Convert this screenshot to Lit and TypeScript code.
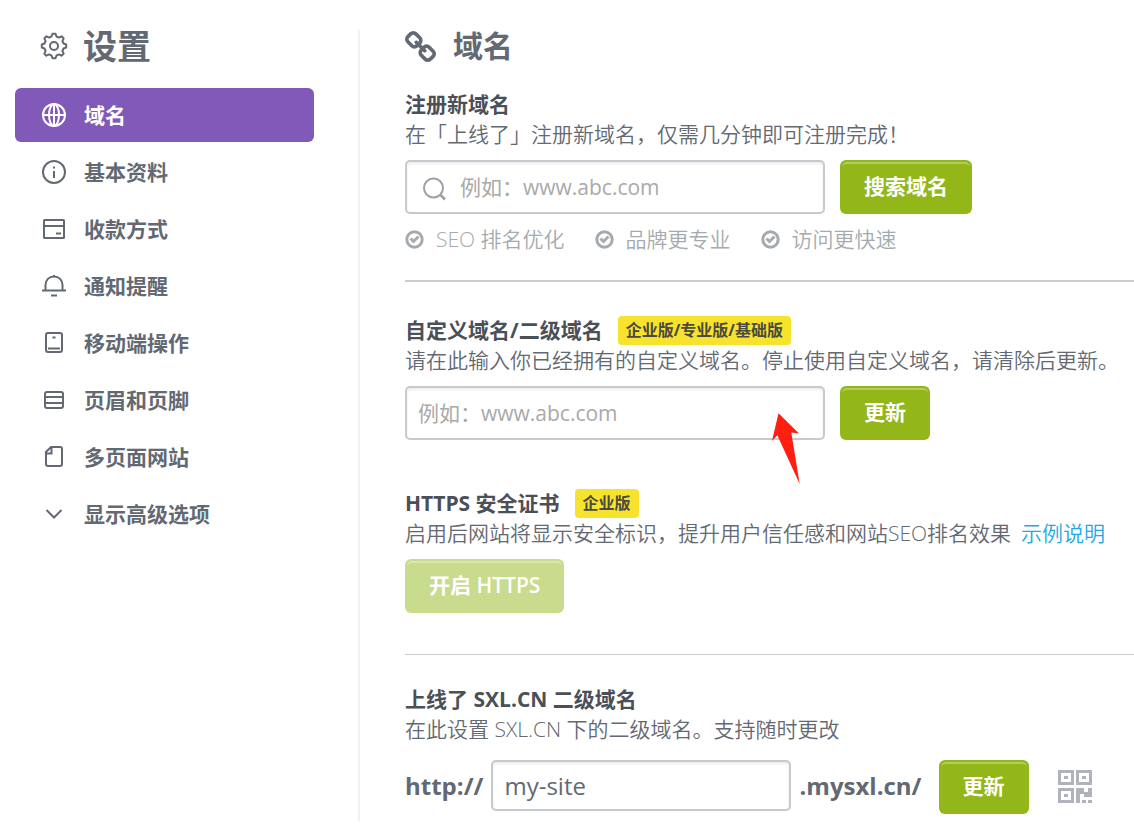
import { LitElement, html, css, svg } from "lit";
import { customElement, state } from "lit/decorators.js";
import { classMap } from "lit/directives/class-map.js";

const icons: Record<string, unknown> = {
  globe: svg`<circle cx="14" cy="14" r="11"/><ellipse cx="14" cy="14" rx="5" ry="11"/><path d="M3 14H25M14 3V25"/>`,
  info: svg`<circle cx="14" cy="14" r="11"/><path d="M14 13V20M14 8.5V10.5"/>`,
  card: svg`<rect x="4" y="5" width="20" height="18" rx="0.5"/><path d="M4 11H24M16 18.5H21"/>`,
  bell: svg`<path d="M2 18.5H26M5.5 18V13C5.5 8 9 4.5 14 4.5S22.500 8 22.500 13V18M14 3V5M11 23.500H17"/>`,
  mobile: svg`<rect x="6" y="4" width="16" height="19" rx="2"/><path d="M8 19.500H20M12.500 8.500H15.500"/>`,
  rows: svg`<rect x="5" y="6" width="18" height="16" rx="2"/><path d="M5 11H23M5 17H23"/>`,
  page: svg`<path d="M11 4H20Q22 4 22 6V21Q22 23 20 23H8Q6 23 6 21V9ZM11.500 4V10.500H6"/>`,
  down: svg`<path d="M6.500 10 14 17.500 21.500 10"/>`,
};

const items = [
  ["globe", "域名"],
  ["info", "基本资料"],
  ["card", "收款方式"],
  ["bell", "通知提醒"],
  ["mobile", "移动端操作"],
  ["rows", "页眉和页脚"],
  ["page", "多页面网站"],
  ["down", "显示高级选项"],
];

const perks = ["SEO 排名优化", "品牌更专业", "访问更快速"];

@customElement("app-root")
export class AppRoot extends LitElement {
  @state() private current = 0;

  static styles = css`
    :host {
      display: block;
      font-family: "Open Sans", "Noto Sans CJK SC", sans-serif;
      font-size: 21px;
      line-height: 30px;
      color: #636972;
      background: #fff;
    }
    * { box-sizing: border-box; }
    .page {
      display: grid;
      grid-template-columns: 360px minmax(0, 1fr);
      padding-top: 30px;
    }
    .side {
      border-right: 2px solid #f1f1f3;
      padding: 0 44px 0 15px;
    }
    .title, .heading {
      display: flex;
      align-items: center;
      margin: 0;
      font-weight: 700;
      height: 32px;
    }
    .title { font-size: 34px; gap: 15px; padding-left: 25px; margin-bottom: 26px; }
    .heading { font-size: 30px; gap: 17px; margin-bottom: 27px; }
    .icon {
      flex: none;
      width: 28px;
      height: 28px;
      fill: none;
      stroke: currentColor;
      stroke-width: 2;
    }
    .link-icon { flex: none; width: 31px; height: 31px; fill: currentColor; }
    .nav { display: flex; flex-direction: column; gap: 3px; }
    .item {
      display: flex;
      align-items: center;
      gap: 16px;
      height: 54px;
      padding-left: 25px;
      border-radius: 6px;
      color: inherit;
      font-weight: 700;
      text-decoration: none;
    }
    .item.on { background: #8159b9; color: #fff; }
    .main { padding: 0 0 7px 45px; }
    .name {
      display: flex;
      align-items: center;
      gap: 15px;
      margin: 0;
      font-size: 21px;
      font-weight: 700;
      color: #4b5058;
    }
    .desc { margin: 0; font-weight: 350; }
    .tag {
      padding: 0 8px;
      font-size: 16px;
      line-height: 29px;
      border-radius: 4px;
      background: #f7e32d;
      color: #4a4a40;
    }
    .row { display: flex; align-items: center; gap: 15px; margin-top: 11px; }
    .field { position: relative; width: 420px; }
    .box {
      display: block;
      width: 100%;
      height: 54px;
      padding: 0 11px;
      font: inherit;
      color: #636972;
      border: 2px solid #c6c9cd;
      border-radius: 5px;
      background: #fff;
      box-shadow: inset 0 2px 3px #ececee;
      outline: none;
    }
    .box::placeholder { color: #a9a9a9; opacity: 1; }
    .search .box { padding-left: 53px; }
    .glass { position: absolute; left: 16px; top: 16px; color: #a0a0a0; }
    .arrow { position: absolute; left: 366px; top: 26px; width: 30px; height: 74px; fill: #ff1e0f; }
    .btn {
      position: relative;
      height: 54px;
      padding: 0 24px 2px;
      border: 0;
      border-radius: 6px;
      background: #93b719;
      color: #fff;
      font: inherit;
      font-weight: 600;
      cursor: pointer;
    }
    .btn::before {
      content: "";
      position: absolute;
      inset: 2px 2px auto;
      height: 8px;
      border-top: 2px solid #b3cc5e;
      border-radius: 6px;
    }
    .btn:disabled { background: #c9db8c; cursor: default; }
    .btn:disabled::before { border-color: #dbe7b2; }
    .perks {
      display: flex;
      gap: 30px;
      margin: 10px 0 26px;
      padding: 0;
      list-style: none;
      font-weight: 350;
      color: #a5aaaf;
    }
    .perk { display: flex; align-items: center; gap: 12px; }
    .check { width: 19px; height: 19px; fill: none; stroke: currentColor; stroke-width: 3; }
    .rule { height: 0; margin: 0; border: 0; border-top: 2px solid #cacdd0; }
    .rule.thin { border-top-width: 1px; margin-top: 41px; }
    .block { padding-top: 33px; }
    .block.last { padding-top: 29px; }
    .block.https { padding-top: 48px; }
    .more { margin-left: 10px; color: #1fa8e4; text-decoration: none; }
    .site { align-items: flex-start; gap: 8px; margin-top: 16px; font-size: 24px; font-weight: 700; line-height: 51px; }
    .site .field { width: 300px; }
    .site .box { height: 51px; font-weight: 400; }
    .site .btn { margin-left: 9px; font-size: 21px; line-height: 30px; }
    .qr { flex: none; align-self: center; width: 34px; height: 34px; margin-left: 21px; fill: #b0b4ba; }
  `;

  render() {
    return html`
      <div class="page">
        <aside class="side">
          <h1 class="title">
            <svg class="icon" viewBox="0 0 28 28">
              <path stroke-linejoin="round" d="M11.500 4.500 12.500 1.800H15.500L16.500 4.500 19 5.600 21.600 4.300 23.700 6.400 22.400 9 23.500 11.500 26.200 12.500V15.500L23.500 16.500 22.400 19 23.700 21.600 21.600 23.700 19 22.400 16.500 23.500 15.500 26.200H12.500L11.500 23.500 9 22.400 6.400 23.700 4.300 21.600 5.600 19 4.500 16.500 1.800 15.500V12.500L4.500 11.500 5.600 9 4.300 6.400 6.400 4.300 9 5.600Z"/>
              <circle cx="14" cy="14" r="4"/>
            </svg>
            设置
          </h1>
          <nav class="nav">
            ${items.map(
              ([icon, label], i) => html`
                <a
                  href="#"
                  class=${classMap({ item: true, on: i === this.current })}
                  @click=${(e: Event) => { e.preventDefault(); this.current = i; }}
                ><svg class="icon" viewBox="0 0 28 28">${icons[icon]}</svg>${label}</a>
              `
            )}
          </nav>
        </aside>
        <main class="main">
          <h2 class="heading">
            <svg class="link-icon" viewBox="16 16 1632 1632">
              <path d="M1456 1216q0-40-28-68l-208-208q-28-28-68-28-42 0-72 32 3 3 19 18.500t21.500 21.500 15 19 13 25.500 3.500 27.500q0 40-28 68t-68 28q-15 0-27.500-3.500t-25.500-13-19-15-21.500-21.500-18.500-19q-33 31-33 73 0 40 28 68l206 207q27 27 68 27 40 0 68-26l147-146q28-28 28-67zm-703-705q0-40-28-68l-206-207q-28-28-68-28-39 0-68 27l-147 146q-28 28-28 67 0 40 28 68l208 208q27 27 68 27 42 0 72-31-3-3-19-18.500t-21.500-21.500-15-19-13-25.500-3.500-27.500q0-40 28-68t68-28q15 0 27.500 3.500t25.500 13 19 15 21.500 21.500 18.500 19q33-31 33-73zm895 705q0 120-85 203l-147 146q-83 83-203 83-121 0-204-85l-206-207q-83-83-83-203 0-123 88-209l-88-88q-86 88-208 88-120 0-204-84l-208-208q-84-84-84-204t85-203l147-146q83-83 203-83 121 0 204 85l206 207q83 83 83 203 0 123-88 209l88 88q86-88 208-88 120 0 204 84l208 208q84 84 84 204z"/>
            </svg>
            域名
          </h2>

          <section>
            <h3 class="name"><label for="search">注册新域名</label></h3>
            <p class="desc">在「上线了」注册新域名，仅需几分钟即可注册完成！</p>
            <div class="row">
              <div class="field search">
                <input class="box" id="search" placeholder="例如：www.abc.com">
                <svg class="icon glass" viewBox="0 0 28 28"><circle cx="12.500" cy="12" r="9.500"/><path stroke-width="2.500" d="M19 18.500 24 23.500"/></svg>
              </div>
              <button class="btn">搜索域名</button>
            </div>
            <ul class="perks">
              ${perks.map(
                (p) => html`<li class="perk"><svg class="check" viewBox="0 0 19 19"><circle cx="9.500" cy="9.500" r="7.700"/><path d="M5.500 8.500 8.500 11.500 13.500 6.500"/></svg>${p}</li>`
              )}
            </ul>
            <hr class="rule">
          </section>

          <section class="block">
            <h3 class="name"><label for="custom">自定义域名/二级域名</label><span class="tag">企业版/专业版/基础版</span></h3>
            <p class="desc">请在此输入你已经拥有的自定义域名。停止使用自定义域名，请清除后更新。</p>
            <div class="row">
              <div class="field">
                <input class="box" id="custom" placeholder="例如：www.abc.com">
                <svg class="arrow" viewBox="0 0 30 74"><path d="M7.500 1.300 28 21.500 20.300 20.500 28.700 72 6.300 23.300 1 29Z"/></svg>
              </div>
              <button class="btn">更新</button>
            </div>
          </section>

          <section class="block https">
            <h3 class="name">HTTPS 安全证书<span class="tag">企业版</span></h3>
            <p class="desc">启用后网站将显示安全标识，提升用户信任感和网站SEO排名效果<a class="more" href="#">示例说明</a></p>
            <div class="row"><button class="btn" disabled>开启 HTTPS</button></div>
            <hr class="rule thin">
          </section>

          <section class="block last">
            <h3 class="name"><label for="site">上线了 SXL.CN 二级域名</label></h3>
            <p class="desc">在此设置 SXL.CN 下的二级域名。支持随时更改</p>
            <div class="row site">
              <span>http://</span>
              <div class="field"><input class="box" id="site" value="my-site"></div>
              <span>.mysxl.cn/</span>
              <button class="btn">更新</button>
              <svg class="qr" viewBox="0 0 34 34">
                <path fill-rule="evenodd" d="M0 0H16V15H0ZM3 3V12H13V3ZM18 0H34V15H18ZM21 3V12H31V3ZM0 18H16V33H0ZM3 21V30H13V21Z"/>
                <path d="M6 6H10V9H6ZM24 6H28V9H24ZM6 24H10V27H6ZM18 18H26V22H30V18H34V27H26V24H22V33H18ZM24 30H28V33H24ZM30 30H34V33H30Z"/>
              </svg>
            </div>
          </section>
        </main>
      </div>
    `;
  }
}
